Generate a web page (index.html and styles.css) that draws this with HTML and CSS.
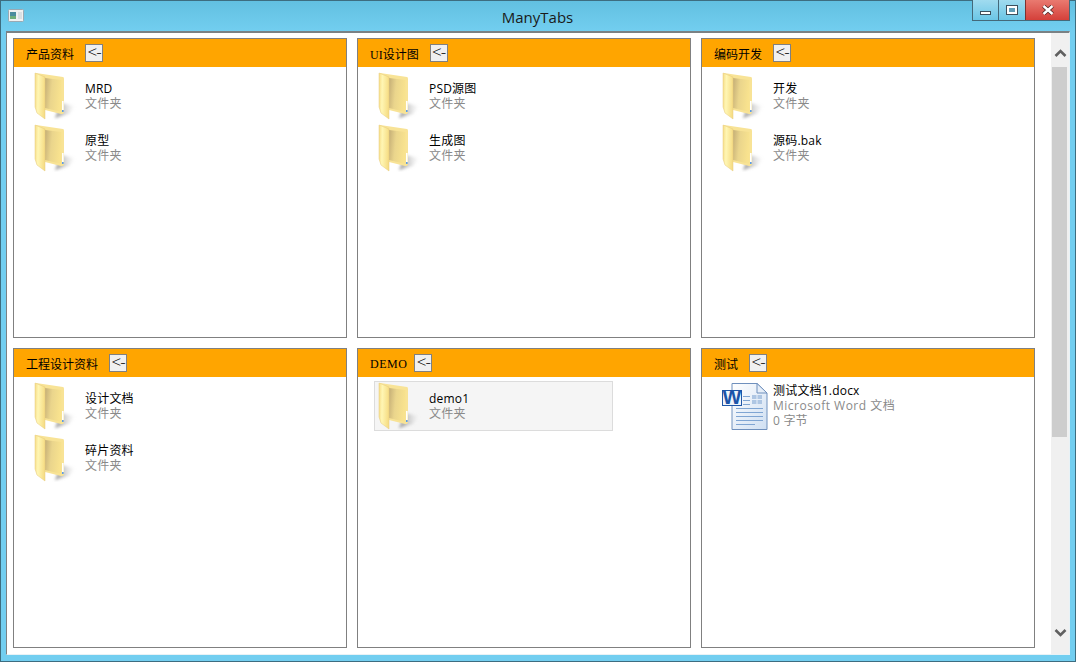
FILE: index.html
```html
<!DOCTYPE html>
<html lang="zh">
<head>
<meta charset="utf-8">
<title>ManyTabs</title>
<link rel="stylesheet" href="styles.css">
</head>
<body>
<svg class="defs" width="0" height="0" aria-hidden="true">
  <defs>
    <linearGradient id="flap" x1="0" y1="0" x2="1" y2="0.1">
      <stop offset="0" stop-color="#f6dc86"/><stop offset="0.35" stop-color="#fff6b4"/><stop offset="1" stop-color="#f6dd85"/>
    </linearGradient>
    <linearGradient id="inner" x1="0" y1="0" x2="1" y2="0.2">
      <stop offset="0" stop-color="#c4ae76"/><stop offset="0.45" stop-color="#ead58c"/><stop offset="1" stop-color="#f8e28e"/>
    </linearGradient>
    <filter id="soft" x="-30%" y="-30%" width="160%" height="160%"><feGaussianBlur stdDeviation="1.6"/></filter>
    <linearGradient id="shade" x1="0" y1="0" x2="1" y2="0">
      <stop offset="0" stop-color="#777" stop-opacity=".8"/><stop offset="1" stop-color="#bbb" stop-opacity="0"/>
    </linearGradient>
    <linearGradient id="page" x1="0" y1="0" x2="1" y2="1">
      <stop offset="0" stop-color="#ffffff"/><stop offset="1" stop-color="#cfdff2"/>
    </linearGradient>
    <symbol id="folder" viewBox="0 0 48 48">
      <path d="M28 31 L42 34 L36 42 L22 46Z" fill="url(#shade)" filter="url(#soft)"/>
      <path d="M3 1 L30 5 Q31 5 31 7 L31 40 Q31 42 28 42 L12 38 Z" fill="#f8e396"/>
      <path d="M12 6 L28.5 8 L28.5 40 L12 36 Z" fill="url(#inner)"/>
      <path d="M2 1 L12 5 L12 47 L4 41 L2 35 Z" fill="url(#flap)" stroke="#e6cb7c" stroke-width=".5"/>
      <rect x="29" y="29" width="1.6" height="9" fill="#ffffff"/>
      <rect x="29" y="38" width="1.6" height="2" fill="#5b9bea"/>
    </symbol>
    <symbol id="word" viewBox="0 0 48 48">
      <path d="M11 1.5 H36 L46 11 V47.5 H11 Z" fill="url(#page)" stroke="#6f90bd"/>
      <path d="M36 1.5 V11 H46 Z" fill="#e6eef8" stroke="#6f90bd"/>
      <g stroke="#7fa5d3" stroke-width="1">
        <path d="M15 26.5 H42M15 30.5 H42M15 34.5 H42M15 38.5 H42M15 42.5 H34"/>
        <path d="M22 14.5 H29M22 18.5 H29M22 22.5 H29"/>
      </g>
      <rect x="31" y="13" width="10" height="9" fill="#aec6e3"/>
      <path d="M31 17.5 H41M36 13 V22" stroke="#e8f0f9"/>
      <rect x="1.5" y="8.5" width="19" height="15" fill="#eef4fb" stroke="#1f56a6"/>
      <text x="11" y="21.5" class="word-w">W</text>
    </symbol>
  </defs>
</svg>
<div class="window">
  <header class="titlebar">
    <svg class="app-icon" width="16" height="13" viewBox="0 0 16 13">
      <rect x=".5" y=".5" width="15" height="12" rx="1" fill="#f1f1f1" stroke="#9aa9b3"/>
      <rect x="2" y="3" width="6" height="7" fill="#4b8c9e"/>
      <rect x="2" y="7" width="6" height="3" fill="#6fae7c"/>
      <rect x="10" y="3" width="4" height="7" fill="#d9dfe3"/>
    </svg>
    <h1 class="title">ManyTabs</h1>
    <div class="controls">
      <div class="ctl ctl-min"><span class="glyph-min"></span></div>
      <div class="ctl ctl-max"><span class="glyph-max"></span></div>
      <div class="ctl ctl-close">
        <svg width="14" height="10" viewBox="0 0 14 10"><path d="M2.5 1 L11.5 9 M11.5 1 L2.5 9" stroke="#4a2422" stroke-width="4"/><path d="M2.5 1 L11.5 9 M11.5 1 L2.5 9" stroke="#fff" stroke-width="2.4"/></svg>
      </div>
    </div>
  </header>
  <main class="client">
    <div class="grid">
      <section class="panel">
        <div class="panel-head"><span class="panel-name">产品资料</span><button class="back">&lt;-</button></div>
        <ul class="items">
          <li class="item"><svg class="icon"><use href="#folder"/></svg><div class="meta"><div class="name">MRD</div><div class="sub">文件夹</div></div></li>
          <li class="item"><svg class="icon"><use href="#folder"/></svg><div class="meta"><div class="name">原型</div><div class="sub">文件夹</div></div></li>
        </ul>
      </section>
      <section class="panel">
        <div class="panel-head"><span class="panel-name">UI设计图</span><button class="back">&lt;-</button></div>
        <ul class="items">
          <li class="item"><svg class="icon"><use href="#folder"/></svg><div class="meta"><div class="name">PSD源图</div><div class="sub">文件夹</div></div></li>
          <li class="item"><svg class="icon"><use href="#folder"/></svg><div class="meta"><div class="name">生成图</div><div class="sub">文件夹</div></div></li>
        </ul>
      </section>
      <section class="panel">
        <div class="panel-head"><span class="panel-name">编码开发</span><button class="back">&lt;-</button></div>
        <ul class="items">
          <li class="item"><svg class="icon"><use href="#folder"/></svg><div class="meta"><div class="name">开发</div><div class="sub">文件夹</div></div></li>
          <li class="item"><svg class="icon"><use href="#folder"/></svg><div class="meta"><div class="name">源码.bak</div><div class="sub">文件夹</div></div></li>
        </ul>
      </section>
      <section class="panel">
        <div class="panel-head"><span class="panel-name">工程设计资料</span><button class="back">&lt;-</button></div>
        <ul class="items">
          <li class="item"><svg class="icon"><use href="#folder"/></svg><div class="meta"><div class="name">设计文档</div><div class="sub">文件夹</div></div></li>
          <li class="item"><svg class="icon"><use href="#folder"/></svg><div class="meta"><div class="name">碎片资料</div><div class="sub">文件夹</div></div></li>
        </ul>
      </section>
      <section class="panel">
        <div class="panel-head"><span class="panel-name panel-name-latin">DEMO</span><button class="back">&lt;-</button></div>
        <ul class="items">
          <li class="item item-hover"><svg class="icon"><use href="#folder"/></svg><div class="meta"><div class="name">demo1</div><div class="sub">文件夹</div></div></li>
        </ul>
      </section>
      <section class="panel">
        <div class="panel-head"><span class="panel-name">测试</span><button class="back">&lt;-</button></div>
        <ul class="items">
          <li class="item item-doc"><svg class="icon"><use href="#word"/></svg><div class="meta"><div class="name">测试文档1.docx</div><div class="sub sub-type">Microsoft Word 文档</div><div class="sub">0 字节</div></div></li>
        </ul>
      </section>
    </div>
    <aside class="scrollbar">
      <svg class="arrow" width="13" height="8" viewBox="0 0 13 8"><path d="M1.5 7 L6.5 2 L11.5 7" fill="none" stroke="#606060" stroke-width="2.6"/></svg>
      <div class="track"><div class="thumb"></div></div>
      <svg class="arrow" width="13" height="8" viewBox="0 0 13 8"><path d="M1.5 1 L6.5 6 L11.5 1" fill="none" stroke="#606060" stroke-width="2.6"/></svg>
    </aside>
  </main>
</div>
</body>
</html>
```
FILE: styles.css
```css
* { box-sizing: border-box; }
html, body { margin: 0; height: 100%; overflow: hidden; }
.defs { display: block; width: 0; height: 0; }
.word-w { font: 700 20px "Liberation Sans", sans-serif; text-anchor: middle; fill: #1c54a8; }
.window {
  width: 1076px;
  height: 662px;
  display: flex;
  flex-direction: column;
  background: linear-gradient(180deg, #62c0e1 0, #72cef0 30px, #72cef0 100%);
  border: 1px solid #3d6d80;
  padding: 0 5px 6px 5px;
}
.titlebar {
  height: 30px;
  flex: none;
  display: flex;
  align-items: flex-start;
  position: relative;
}
.app-icon { margin: 8px 0 0 2px; }
.title {
  position: absolute;
  left: -1px;
  right: 0;
  top: 6px;
  margin: 0;
  text-align: center;
  font: 400 15px/20px "Open Sans", "Noto Sans", sans-serif;
  color: #1a1a1a;
}
.controls {
  margin-left: auto;
  margin-top: -1px;
  display: flex;
  height: 21px;
  border: 1px solid #44697a;
  border-top: 0;
  position: relative;
}
.ctl { display: flex; align-items: center; justify-content: center; height: 100%; }
.ctl-min, .ctl-max { width: 26px; background: linear-gradient(180deg, #a0dbef, #6bc6e6); border-right: 1px solid #44697a; }
.ctl-max { width: 26px; border-right: 0; }
.ctl-close { width: 44px; background: linear-gradient(180deg, #e97a70, #d4403a); border-left: 1px solid #7c3230; }
.glyph-min { width: 11px; height: 4px; margin-top: 5px; background: #fff; border: 1px solid #3d4f5c; }
.glyph-max { width: 10px; height: 8px; background: #5f9db6; border: 2px solid #fff; outline: 1px solid #3d4f5c; }
.client {
  flex: 1;
  min-height: 0;
  display: flex;
  background: #fff;
  border: 1px solid #e8f2f6;
  border-top: 2px solid #7a8184;
  border-left: 1px solid #7a8184;
  padding: 5px 0 0 6px;
}
.grid {
  flex: 1;
  display: grid;
  grid-template-columns: repeat(3, 334px);
  grid-template-rows: repeat(2, 300px);
  gap: 10px;
  align-content: start;
}
.panel { border: 1px solid #808080; background: #fff; min-width: 0; }
.panel-head {
  height: 28px;
  background: #ffa500;
  display: flex;
  align-items: center;
  padding-left: 12px;
  gap: 11px;
}
.panel-name {
  font: 400 12px/16px "Liberation Serif", "Noto Sans CJK SC", serif;
  color: #000;
  padding-top: 4px;
}
.panel-name-latin { letter-spacing: .5px; margin-right: -4px; padding-top: 2px; }
.back {
  width: 18px;
  height: 18px;
  padding: 0 0 3px;
  border: 1px solid #808080;
  border-radius: 0;
  background: #f0f0f0;
  color: #000;
  font: 300 17px/14px "Open Sans", sans-serif;
  letter-spacing: -1px;
}
.items {
  list-style: none;
  margin: 0;
  padding: 4px 0 0 16px;
}
.item {
  width: 239px;
  height: 50px;
  margin-bottom: 2px;
  border: 1px solid transparent;
  display: flex;
  align-items: center;
  gap: 4px;
  padding-left: 2px;
}
.item-hover { background: #f5f5f5; border-color: #dcdcdc; }
.item-doc .meta { margin-top: -2px; }
.icon { width: 48px; height: 48px; flex: none; }
.meta { display: flex; flex-direction: column; }
.name, .sub { font: 400 12px/15px "Open Sans", "Noto Sans CJK SC", sans-serif; letter-spacing: .2px; }
.name { color: #000; }
.sub { color: #8a8a8a; }
.sub-type { letter-spacing: .5px; }
.scrollbar {
  width: 18px;
  margin-top: -5px;
  flex: none;
  background: #f0f0f0;
  display: flex;
  flex-direction: column;
  align-items: center;
  padding: 16px 0 17px;
}
.arrow { flex: none; }
.track { flex: 1; width: 100%; padding: 10px 1px 0; min-height: 0; }
.thumb { width: 15px; height: 370px; background: #cdcdcd; }
```
